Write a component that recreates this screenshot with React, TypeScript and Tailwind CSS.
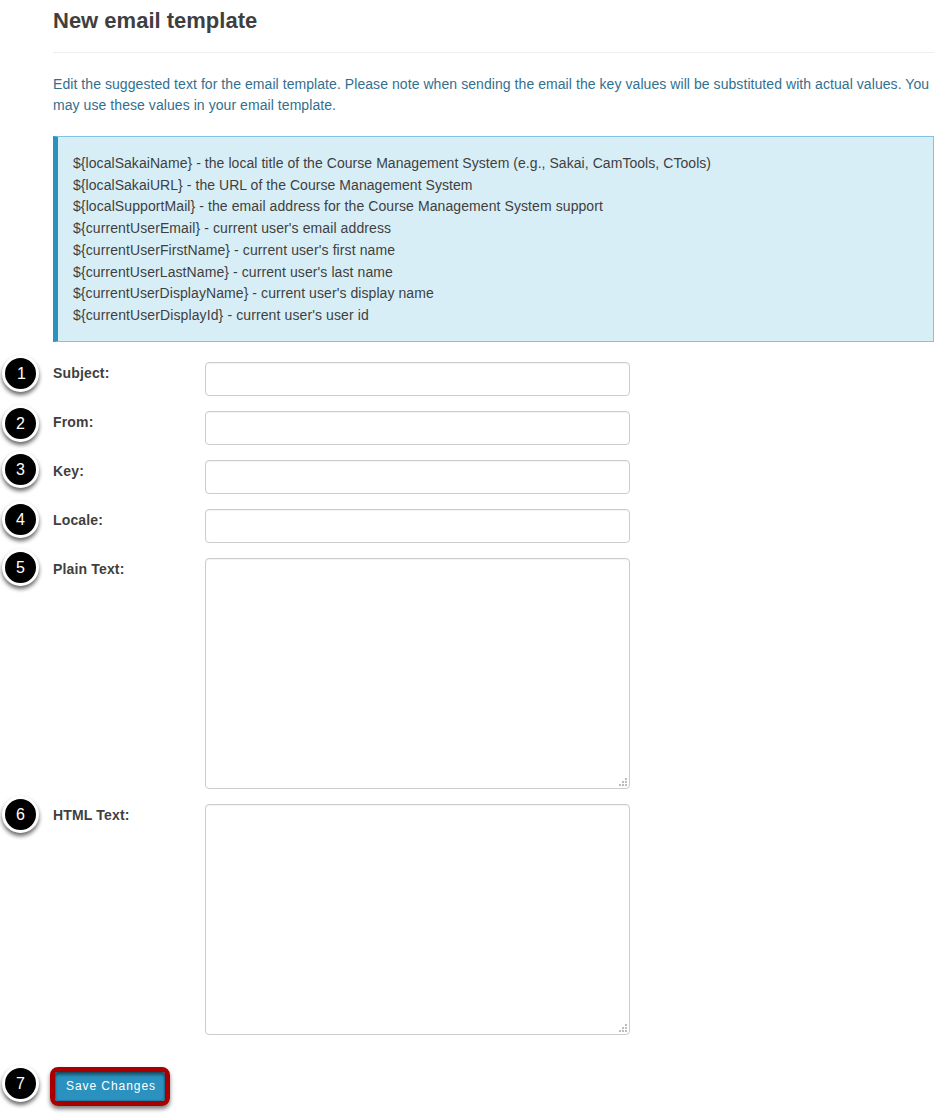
import { useState } from "react";

type Field = {
  id: string;
  label: string;
  multiline?: boolean;
  badge: string;
};

type Placeholder = { text: string; tracking: string };

const placeholders: Placeholder[] = [
  {
    text: "${localSakaiName} - the local title of the Course Management System (e.g., Sakai, CamTools, CTools)",
    tracking: "tracking-[0.055px]",
  },
  { text: "${localSakaiURL} - the URL of the Course Management System", tracking: "tracking-[0.055px]" },
  {
    text: "${localSupportMail} - the email address for the Course Management System support",
    tracking: "tracking-[0.088px]",
  },
  { text: "${currentUserEmail} - current user's email address", tracking: "tracking-[0.1px]" },
  { text: "${currentUserFirstName} - current user's first name", tracking: "tracking-[0.1px]" },
  { text: "${currentUserLastName} - current user's last name", tracking: "tracking-[0.09px]" },
  { text: "${currentUserDisplayName} - current user's display name", tracking: "tracking-[0.075px]" },
  { text: "${currentUserDisplayId} - current user's user id", tracking: "tracking-[0.11px]" },
];

const fields: Field[] = [
  { id: "subject", label: "Subject:", badge: "-top-[7px] pl-0.5" },
  { id: "from", label: "From:", badge: "-top-[6px]" },
  { id: "key", label: "Key:", badge: "-top-[9px]" },
  { id: "locale", label: "Locale:", badge: "-top-[8px]" },
  { id: "plain", label: "Plain Text:", multiline: true, badge: "-top-[9px]" },
  { id: "html", label: "HTML Text:", multiline: true, badge: "-top-[8px]" },
];

function StepBadge({ step, className }: { step: number; className: string }) {
  return (
    <span
      className={`absolute -left-[51px] flex size-[37px] items-center justify-center rounded-full border-3 border-white bg-black pt-px text-base leading-none text-white shadow-[0_3px_4px_rgba(0,0,0,0.6)] ${className}`}
    >
      {step}
    </span>
  );
}

function ResizeGrip() {
  return (
    <svg
      className="pointer-events-none absolute right-[3px] bottom-[3px]"
      width="8"
      height="8"
      viewBox="0 0 8 8"
      fill="#bcbcbc"
      shapeRendering="crispEdges"
      aria-hidden="true"
    >
      <rect x="6" y="0" width="2" height="2" />
      <rect x="3" y="3" width="2" height="2" />
      <rect x="6" y="3" width="2" height="2" />
      <rect x="0" y="6" width="2" height="2" />
      <rect x="3" y="6" width="2" height="2" />
      <rect x="6" y="6" width="2" height="2" />
    </svg>
  );
}

const controlClass =
  "block w-full resize-none rounded-[4px] border border-[#cccccc] bg-white px-3 text-sm text-[#444] shadow-[inset_0_1px_1px_rgba(0,0,0,0.05)] outline-none focus:border-[#2b91bf]";

export default function App() {
  const [values, setValues] = useState<Record<string, string>>({});
  const update = (id: string, value: string) =>
    setValues((current) => ({ ...current, [id]: value }));

  return (
    <main className="min-h-[1119px] w-[948px] bg-white pr-[14px] pl-[53px] font-['Liberation_Sans',Arial,sans-serif] text-sm text-[#3f3f3f]">
      <h1 className="h-[53px] border-b border-[#eeeeee] pt-[8px] text-[22px] leading-[26px] font-bold">
        New email template
      </h1>
      <p className="mt-[21px] leading-[21px] tracking-[0.065px] whitespace-nowrap text-[#31708f]">
        Edit the suggested text for the email template. Please note when sending the email the key values will be substituted with actual values. You
        <br />
        may use these values in your email template.
      </p>

      <ul className="mt-[20px] h-[206px] border border-l-5 border-[#7fc4e2] border-l-[#2b91bf] bg-[#d8eef6] pt-[16px] pl-[15px] leading-[21.7px]">
        {placeholders.map((line) => (
          <li key={line.text} className={line.tracking}>
            {line.text}
          </li>
        ))}
      </ul>

      <form onSubmit={(event) => event.preventDefault()}>
        <div className="mt-[20px] flex flex-col gap-[15px]">
          {fields.map((field, index) => (
            <div key={field.id} className="relative flex items-start">
              <StepBadge step={index + 1} className={field.badge} />
              <label
                htmlFor={field.id}
                className="w-[152px] shrink-0 text-sm leading-[22px] font-bold tracking-[0.16px]"
              >
                {field.label}
              </label>
              <div className="relative w-[425px]">
                {field.multiline ? (
                  <>
                    <textarea
                      id={field.id}
                      className={`${controlClass} h-[231px] py-1.5`}
                      value={values[field.id] ?? ""}
                      onChange={(event) => update(field.id, event.target.value)}
                    />
                    <ResizeGrip />
                  </>
                ) : (
                  <input
                    id={field.id}
                    type="text"
                    className={`${controlClass} h-[34px]`}
                    value={values[field.id] ?? ""}
                    onChange={(event) => update(field.id, event.target.value)}
                  />
                )}
              </div>
            </div>
          ))}
        </div>

        <div className="relative mt-[32px] flex">
          <StepBadge step={7} className="-top-[2px]" />
          <div className="-ml-[3px] flex rounded-[8px] border-5 border-[#a80000] shadow-[0_3px_4px_rgba(0,0,0,0.5)]">
            <button
              type="submit"
              className="h-[29px] w-[110px] rounded-[3px] bg-[#2b91bf] pb-[2px] pl-[2px] text-xs tracking-[0.95px] text-white shadow-[inset_0_3px_3px_rgba(0,0,0,0.4),inset_0_0_2px_rgba(0,0,0,0.5)]"
            >
              Save Changes
            </button>
          </div>
        </div>
      </form>
    </main>
  );
}
